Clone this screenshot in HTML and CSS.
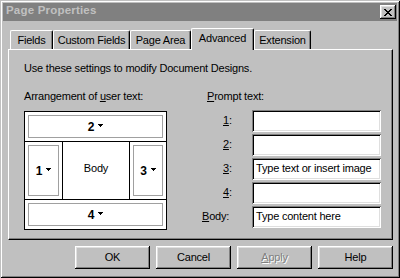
FILE: index.html
```html
<!DOCTYPE html>
<html>
<head>
<meta charset="utf-8">
<link rel="stylesheet" href="styles.css">
</head>
<body>
<div class="window">
  <div class="titlebar">
    <span class="title">Page Properties</span>
    <button class="close" type="button" aria-label="Close">
      <svg class="close-glyph" width="8" height="7" viewBox="0 0 8 7" shape-rendering="crispEdges"><path d="M0 0h2v1H0zM6 0h2v1H6zM1 1h2v1H1zM5 1h2v1H5zM2 2h4v1H2zM3 3h2v1H3zM2 4h4v1H2zM1 5h2v1H1zM5 5h2v1H5zM0 6h2v1H0zM6 6h2v1H6z" fill="#000"/></svg>
    </button>
  </div>
  <div class="content">
    <div class="tabs">
      <div class="tab tab-fields">Fields</div>
      <div class="tab tab-custom">Custom Fields</div>
      <div class="tab tab-page">Page Area</div>
      <div class="tab tab-advanced tab-active">Advanced</div>
      <div class="tab tab-extension">Extension</div>
    </div>
    <div class="panel">
      <p class="intro">Use these settings to modify Document Designs.</p>
      <div class="columns">
        <div class="arrange">
          <div class="heading arrange-heading">Arrangement of <u>u</u>ser text:</div>
          <div class="layout">
            <div class="cell cell-wide"><div class="slot">2<svg class="caret" width="5" height="3" viewBox="0 0 5 3" shape-rendering="crispEdges"><path d="M0 0h5v1H0zM1 1h3v1H1zM2 2h1v1H2z" fill="#000"/></svg></div></div>
            <div class="cell"><div class="slot">1<svg class="caret" width="5" height="3" viewBox="0 0 5 3" shape-rendering="crispEdges"><path d="M0 0h5v1H0zM1 1h3v1H1zM2 2h1v1H2z" fill="#000"/></svg></div></div>
            <div class="cell body-cell">Body</div>
            <div class="cell"><div class="slot">3<svg class="caret" width="5" height="3" viewBox="0 0 5 3" shape-rendering="crispEdges"><path d="M0 0h5v1H0zM1 1h3v1H1zM2 2h1v1H2z" fill="#000"/></svg></div></div>
            <div class="cell cell-wide"><div class="slot">4<svg class="caret" width="5" height="3" viewBox="0 0 5 3" shape-rendering="crispEdges"><path d="M0 0h5v1H0zM1 1h3v1H1zM2 2h1v1H2z" fill="#000"/></svg></div></div>
          </div>
        </div>
        <div class="prompts">
          <div class="heading prompt-heading"><u>P</u>rompt text:</div>
          <div class="fields">
            <div class="label label-num"><u>1</u>:</div><div class="field"></div>
            <div class="label label-num"><u>2</u>:</div><div class="field"></div>
            <div class="label label-num"><u>3</u>:</div><div class="field">Type text or insert image</div>
            <div class="label label-num"><u>4</u>:</div><div class="field"></div>
            <div class="label"><u>B</u>ody:</div><div class="field">Type content here</div>
          </div>
        </div>
      </div>
    </div>
    <div class="buttons">
      <button class="btn" type="button">OK</button>
      <button class="btn" type="button">Cancel</button>
      <button class="btn btn-disabled" type="button"><u>A</u>pply</button>
      <button class="btn" type="button">Help</button>
    </div>
  </div>
</div>
</body>
</html>
```
FILE: styles.css
```css
body {
  margin: 0;
  background: #c0c0c0;
  font-family: "Liberation Sans", Arial, sans-serif;
  font-size: 11px;
  letter-spacing: -0.2px;
  color: #000;
}

.window {
  width: 400px;
  height: 278px;
  box-sizing: border-box;
  padding: 3px;
  background: #c0c0c0;
  box-shadow: inset 1px 1px #c0c0c0, inset -1px -1px #000, inset 2px 2px #fff, inset -2px -2px #808080;
}

.titlebar {
  height: 18px;
  background: #808080;
  display: flex;
  align-items: flex-start;
}

.title {
  color: #c0c0c0;
  font-weight: bold;
  font-size: 11.5px;
  letter-spacing: 0.2px;
  line-height: 14px;
  margin-left: 3px;
}

.close {
  margin: 2px 1px 0 auto;
  width: 16px;
  height: 14px;
  padding: 0;
  border: 0;
  background: #c0c0c0;
  box-shadow: inset -1px -1px #000, inset 1px 1px #fff, inset -2px -2px #808080, inset 2px 2px #dfdfdf;
  display: flex;
  align-items: center;
  justify-content: center;
}

.close-glyph {
  display: block;
}

.content {
  padding: 7px 4px 0 5px;
}

.tabs {
  display: flex;
  align-items: flex-end;
  height: 21px;
  padding-left: 2px;
}

.tab {
  box-sizing: border-box;
  height: 19px;
  padding-top: 3px;
  line-height: 13px;
  text-align: center;
  white-space: nowrap;
  border-top: 1px solid #fff;
  border-left: 1px solid #fff;
  border-right: 1px solid #000;
  border-radius: 2px 2px 0 0;
  box-shadow: inset -1px 0 #808080;
  background: #c0c0c0;
}

.tab-fields { width: 43px; }
.tab-custom { width: 77px; }
.tab-page { width: 61px; }
.tab-advanced { width: 63px; }
.tab-extension { width: 57px; }

.tab-active {
  height: 22px;
  margin-bottom: -1px;
  position: relative;
  z-index: 1;
}

.panel {
  box-sizing: border-box;
  height: 191px;
  border: 1px solid;
  border-color: #fff #000 #000 #fff;
  box-shadow: inset -1px -1px #808080;
  padding: 12px 0 0 15px;
}

.intro {
  margin: 0 0 15px;
  line-height: 13px;
}

.columns {
  display: flex;
  align-items: flex-start;
}

.heading {
  line-height: 13px;
}

.arrange-heading {
  margin-bottom: 8px;
}

.layout {
  display: grid;
  grid-template-columns: 37px 66px 36px;
  grid-template-rows: 29px 57px 29px;
  gap: 1px;
  width: max-content;
  background: #000;
  border: 1px solid #000;
}

.cell {
  background: #fff;
  padding: 3px;
}

.cell-wide {
  grid-column: 1 / -1;
}

.slot {
  box-sizing: border-box;
  height: 100%;
  border: 1px solid #a0a0a0;
  display: flex;
  align-items: center;
  justify-content: center;
  font-weight: bold;
  font-size: 12px;
  letter-spacing: 0;
}

.caret {
  display: block;
  margin: 0 0 2px 4px;
}

.body-cell {
  display: flex;
  align-items: center;
  justify-content: center;
  padding: 0 0 6px;
}

.prompts {
  margin-left: 35px;
}

.prompt-heading {
  margin: 0 0 7px 5px;
}

.fields {
  display: grid;
  grid-template-columns: 50px 129px;
  grid-auto-rows: 22px;
  row-gap: 2px;
  align-items: center;
}

.label {
  line-height: 13px;
  padding-bottom: 2px;
}

.label-num {
  padding-left: 21px;
}

.field {
  box-sizing: border-box;
  height: 22px;
  padding: 1px 4px 0;
  line-height: 18px;
  white-space: nowrap;
  overflow: hidden;
  background: #fff;
  box-shadow: inset 1px 1px #808080, inset -1px -1px #fff, inset 2px 2px #000, inset -2px -2px #dfdfdf;
}

.buttons {
  display: flex;
  justify-content: flex-end;
  gap: 6px;
  margin-top: 6px;
}

.btn {
  width: 75px;
  height: 23px;
  padding: 0 0 2px;
  border: 0;
  background: #c0c0c0;
  font-family: "Liberation Sans", Arial, sans-serif;
  font-size: 11px;
  letter-spacing: -0.2px;
  color: #000;
  box-shadow: inset -1px -1px #000, inset 1px 1px #fff, inset -2px -2px #808080, inset 2px 2px #dfdfdf;
}

.btn-disabled {
  color: #808080;
  text-shadow: 1px 1px #fff;
}
```
